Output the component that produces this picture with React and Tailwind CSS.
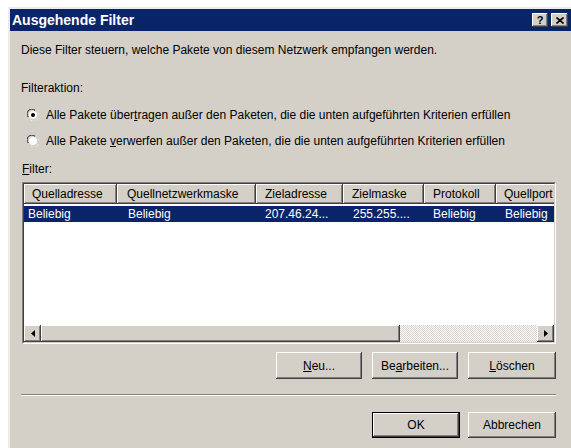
import React from "react";

// Win2000-style dialog: outgoing packet filters
const FACE = "#D4D0C8";

const raised =
  "shadow-[inset_-1px_-1px_#404040,inset_1px_1px_#ffffff,inset_-2px_-2px_#808080,inset_2px_2px_#D4D0C8]";

const columns = [
  { title: "Quelladresse", width: 93, value: "Beliebig", hp: "pl-[8px]", ip: "pl-[4px]" },
  { title: "Quellnetzwerkmaske", width: 139, value: "Beliebig", hp: "pl-[10px]", ip: "pl-[11px]" },
  { title: "Zieladresse", width: 87, value: "207.46.24...", hp: "pl-[9px]", ip: "pl-[9px]" },
  { title: "Zielmaske", width: 81, value: "255.255....", hp: "pl-[9px]", ip: "pl-[10px]" },
  { title: "Protokoll", width: 72, value: "Beliebig", hp: "pl-[9px]", ip: "pl-[9px]" },
  { title: "Quellport", width: 80, value: "Beliebig", hp: "pl-[8px]", ip: "pl-[9px]" },
];

function Radio({ checked }) {
  return (
    <svg width="12" height="12" viewBox="0 0 12 12" className="shrink-0">
      <path d="M0.5 8 A5.5 5.5 0 0 1 8 0.5" fill="none" stroke="#808080" />
      <path d="M1.5 8 A4.5 4.5 0 0 1 8 1.5" fill="none" stroke="#404040" />
      <path d="M4 11.5 A5.5 5.5 0 0 0 11.5 4" fill="none" stroke="#ffffff" />
      <path d="M4 10.5 A4.5 4.5 0 0 0 10.5 4" fill="none" stroke="#D4D0C8" />
      <circle cx="6" cy="6" r="4" fill="#ffffff" />
      {checked && <circle cx="6" cy="6" r="2" fill="#000000" />}
    </svg>
  );
}

function Button({ children, isDefault, className = "" }) {
  return (
    <div
      className={`flex items-center justify-center bg-[#D4D0C8] text-[12px] text-black ${
        isDefault
          ? "border border-black shadow-[inset_-1px_-1px_#404040,inset_1px_1px_#ffffff,inset_-2px_-2px_#808080]"
          : raised
      } ${className}`}
    >
      {children}
    </div>
  );
}

function Arrow({ dir }) {
  return (
    <div className={`flex h-[17px] w-[17px] shrink-0 items-center justify-center bg-[#D4D0C8] ${raised}`}>
      <svg width="4" height="7" viewBox="0 0 4 7">
        {dir === "left" ? <path d="M4 0 L0 3.5 L4 7 Z" fill="#000" /> : <path d="M0 0 L4 3.5 L0 7 Z" fill="#000" />}
      </svg>
    </div>
  );
}

export default function App() {
  return (
    <div
      className="h-[448px] w-[571px] overflow-hidden bg-white pl-[8px] pt-[7px]"
      style={{ fontFamily: '"Liberation Sans", Arial, sans-serif' }}
    >
      <div className="h-[441px] w-[600px] border-l-2 border-t-2 border-l-[#EEECE8] border-t-[#EEECE8] bg-[#D4D0C8]">
        {/* caption */}
        <div className="flex h-[22px] w-[561px] items-center justify-between bg-[#0A246A] pl-[2px] pr-[3px]">
          <span className="text-[14px] font-bold text-white">Ausgehende Filter</span>
          <div className="flex gap-[3px]">
            <div className={`flex h-[14px] w-[16px] items-center justify-center bg-[#D4D0C8] text-[11px] font-bold leading-none ${raised}`}>
              ?
            </div>
            <div className={`flex h-[14px] w-[17px] items-center justify-center bg-[#D4D0C8] ${raised}`}>
              <svg width="8" height="7" viewBox="0 0 8 7">
                <path d="M0.5 0.5 L7.5 6.5 M7.5 0.5 L0.5 6.5" stroke="#000" strokeWidth="1.6" />
              </svg>
            </div>
          </div>
        </div>

        <div className="flex w-[546px] flex-col pl-[11px] text-[12px] leading-[14px] text-black">
          <p className="mt-[12px]">Diese Filter steuern, welche Pakete von diesem Netzwerk empfangen werden.</p>
          <p className="mt-[24px]">Filteraktion:</p>

          <div className="ml-[6px] mt-[13px] flex items-center gap-[7px]">
            <Radio checked />
            <span>
              Alle Pakete über<u className="underline-offset-1">t</u>ragen außer den Paketen, die die unten
              aufgeführten Kriterien erfüllen
            </span>
          </div>
          <div className="ml-[6px] mt-[12px] flex items-center gap-[7px]">
            <Radio />
            <span>
              Alle Pakete <u className="underline-offset-1">v</u>erwerfen außer den Paketen, die die unten
              aufgeführten Kriterien erfüllen
            </span>
          </div>

          <p className="ml-[1px] mt-[14px]">
            <u className="underline-offset-1">F</u>ilter:
          </p>

          {/* list view */}
          <div className="ml-[1px] mt-[6px] flex h-[162px] w-[534px] flex-col border border-b-white border-l-[#808080] border-r-white border-t-[#808080]">
            <div className="flex min-h-0 flex-1 flex-col overflow-hidden border border-b-[#D4D0C8] border-l-[#404040] border-r-[#D4D0C8] border-t-[#404040] bg-white">
              <div className="flex-1 overflow-hidden">
                <div className="flex h-[20px] w-[600px]">
                  {columns.map((c) => (
                    <div
                      key={c.title}
                      style={{ width: c.width }}
                      className={`flex shrink-0 items-center bg-[#D4D0C8] ${c.hp} ${raised}`}
                    >
                      {c.title}
                    </div>
                  ))}
                </div>
                <div className="mt-[2px] flex h-[16px] w-[600px] bg-[#0A246A] text-white">
                  {columns.map((c) => (
                    <div key={c.title} style={{ width: c.width }} className={`flex shrink-0 items-center ${c.ip}`}>
                      {c.value}
                    </div>
                  ))}
                </div>
              </div>

              {/* horizontal scrollbar */}
              <div className="flex h-[17px] shrink-0">
                <Arrow dir="left" />
                <div className={`h-[17px] w-[359px] shrink-0 bg-[#D4D0C8] ${raised}`} />
                <div className="h-[17px] flex-1 bg-[repeating-conic-gradient(#D4D0C8_0_25%,#ffffff_0_50%)] bg-[length:2px_2px]" />
                <Arrow dir="right" />
              </div>
            </div>
          </div>

          <div className="mt-[8px] flex w-[535px] justify-end gap-[10px]">
            <Button className="h-[27px] w-[86px]">
              <span>
                <u className="underline-offset-1">N</u>eu...
              </span>
            </Button>
            <Button className="h-[27px] w-[86px]">
              <span>
                Be<u className="underline-offset-1">a</u>rbeiten...
              </span>
            </Button>
            <Button className="h-[27px] w-[88px]">
              <span>
                <u className="underline-offset-1">L</u>öschen
              </span>
            </Button>
          </div>

          <div className="mt-[15px] h-[2px] w-[535px] border-b border-t border-b-white border-t-[#808080]" />

          <div className="mt-[16px] flex w-[535px] justify-end gap-[8px]">
            <Button isDefault className="h-[26px] w-[88px]">
              OK
            </Button>
            <Button className="h-[26px] w-[88px]">Abbrechen</Button>
          </div>
        </div>
      </div>
    </div>
  );
}
